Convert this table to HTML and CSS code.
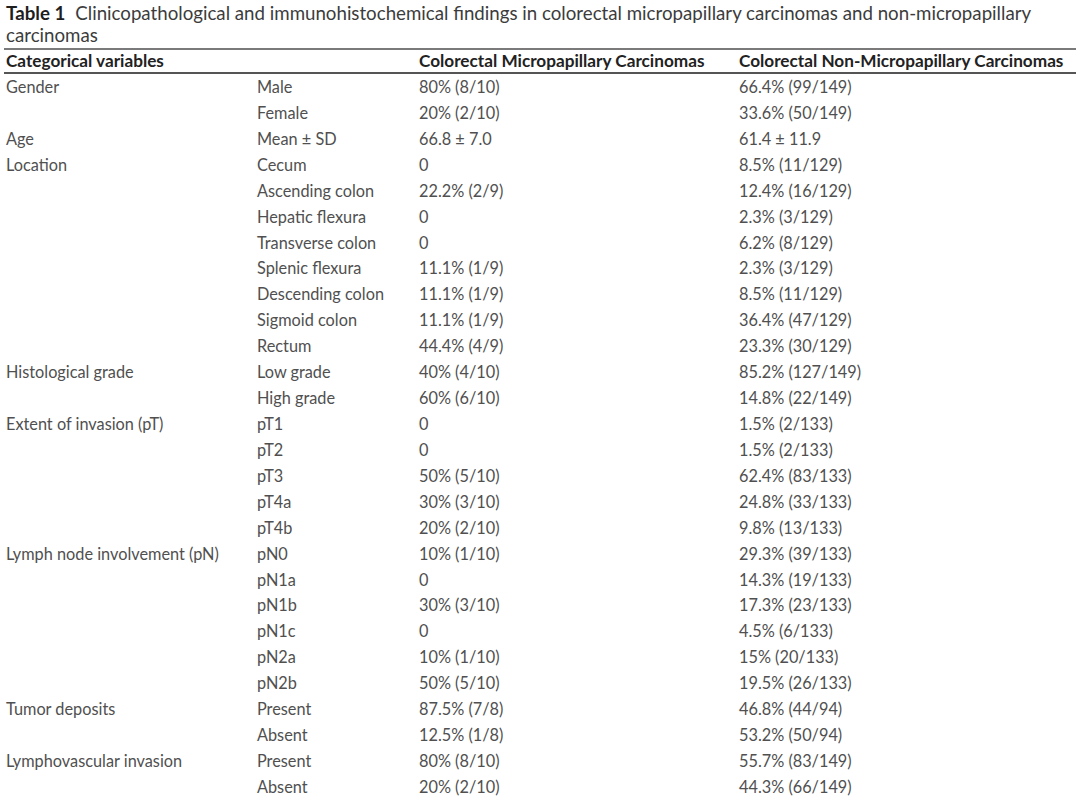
FILE: index.html
```html
<!DOCTYPE html>
<html>
<head>
<meta charset="utf-8">
<link rel="stylesheet" href="styles.css">
</head>
<body>
<div class="page">
  <div class="caption"><span class="label">Table 1</span>Clinicopathological and immunohistochemical findings in colorectal micropapillary carcinomas and non-micropapillary carcinomas</div>
  <div class="table">
    <div class="head">
      <div>Categorical variables</div><div></div><div>Colorectal Micropapillary Carcinomas</div><div>Colorectal Non-Micropapillary Carcinomas</div>
    </div>
    <div class="body">
      <div>Gender</div><div>Male</div><div>80% (8/10)</div><div>66.4% (99/149)</div>
      <div></div><div>Female</div><div>20% (2/10)</div><div>33.6% (50/149)</div>
      <div>Age</div><div>Mean ± SD</div><div>66.8 ± 7.0</div><div>61.4 ± 11.9</div>
      <div>Location</div><div>Cecum</div><div>0</div><div>8.5% (11/129)</div>
      <div></div><div>Ascending colon</div><div>22.2% (2/9)</div><div>12.4% (16/129)</div>
      <div></div><div>Hepatic flexura</div><div>0</div><div>2.3% (3/129)</div>
      <div></div><div>Transverse colon</div><div>0</div><div>6.2% (8/129)</div>
      <div></div><div>Splenic flexura</div><div>11.1% (1/9)</div><div>2.3% (3/129)</div>
      <div></div><div>Descending colon</div><div>11.1% (1/9)</div><div>8.5% (11/129)</div>
      <div></div><div>Sigmoid colon</div><div>11.1% (1/9)</div><div>36.4% (47/129)</div>
      <div></div><div>Rectum</div><div>44.4% (4/9)</div><div>23.3% (30/129)</div>
      <div>Histological grade</div><div>Low grade</div><div>40% (4/10)</div><div>85.2% (127/149)</div>
      <div></div><div>High grade</div><div>60% (6/10)</div><div>14.8% (22/149)</div>
      <div>Extent of invasion (pT)</div><div>pT1</div><div>0</div><div>1.5% (2/133)</div>
      <div></div><div>pT2</div><div>0</div><div>1.5% (2/133)</div>
      <div></div><div>pT3</div><div>50% (5/10)</div><div>62.4% (83/133)</div>
      <div></div><div>pT4a</div><div>30% (3/10)</div><div>24.8% (33/133)</div>
      <div></div><div>pT4b</div><div>20% (2/10)</div><div>9.8% (13/133)</div>
      <div>Lymph node involvement (pN)</div><div>pN0</div><div>10% (1/10)</div><div>29.3% (39/133)</div>
      <div></div><div>pN1a</div><div>0</div><div>14.3% (19/133)</div>
      <div></div><div>pN1b</div><div>30% (3/10)</div><div>17.3% (23/133)</div>
      <div></div><div>pN1c</div><div>0</div><div>4.5% (6/133)</div>
      <div></div><div>pN2a</div><div>10% (1/10)</div><div>15% (20/133)</div>
      <div></div><div>pN2b</div><div>50% (5/10)</div><div>19.5% (26/133)</div>
      <div>Tumor deposits</div><div>Present</div><div>87.5% (7/8)</div><div>46.8% (44/94)</div>
      <div></div><div>Absent</div><div>12.5% (1/8)</div><div>53.2% (50/94)</div>
      <div>Lymphovascular invasion</div><div>Present</div><div>80% (8/10)</div><div>55.7% (83/149)</div>
      <div></div><div>Absent</div><div>20% (2/10)</div><div>44.3% (66/149)</div>
    </div>
  </div>
</div>
</body>
</html>
```

FILE: styles.css
```css
html, body {
  margin: 0;
  padding: 0;
  background: #ffffff;
}
.page {
  font-family: Lato, "Liberation Sans", sans-serif;
  color: #505050;
  padding: 2px 4px 0 4px;
}
.caption {
  font-size: 18.7px;
  line-height: 22px;
  padding: 0 2px;
  height: 46px;
  color: #3c3c3c;
}
.caption .label {
  color: #1e1e1e;
  font-weight: 700;
  margin-right: 10px;
}
.table {
  border-top: 2px solid #7a7a7a;
}
.head, .body {
  display: grid;
  grid-template-columns: 251px 162px 320px 1fr;
  padding-left: 2px;
}
.head {
  font-weight: 700;
  color: #222;
  font-size: 17.2px;
  height: 22px;
  line-height: 22px;
  border-bottom: 2px solid #555;
}
.body {
  font-size: 16.3px;
  grid-auto-rows: 25.93px;
  line-height: 25.93px;
}
.body div {
  white-space: nowrap;
}
```
